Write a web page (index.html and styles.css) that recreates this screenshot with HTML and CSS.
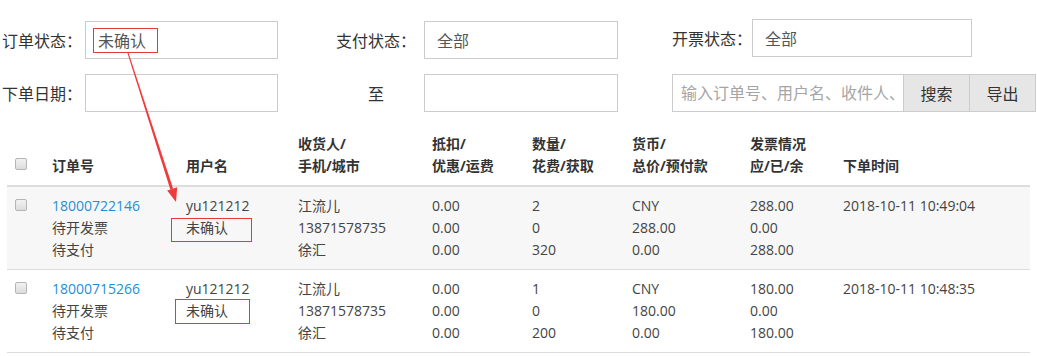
FILE: index.html
```html
<!DOCTYPE html>
<html lang="zh-CN">
<head>
    <meta charset="UTF-8">
    <title>订单列表</title>
    <link rel="stylesheet" href="styles.css">
</head>
<body>
    <div class="page">
        <!-- 검색 조건 -->
        <div class="filter">
            <div class="filter-row">
                <div class="field field-a">
                    <label>订单状态：</label>
                    <input type="text" class="ipt" value="未确认" readonly>
                </div>
                <div class="field field-b">
                    <label>支付状态：</label>
                    <input type="text" class="ipt" value="全部" readonly>
                </div>
                <div class="field field-c up">
                    <label>开票状态：</label>
                    <input type="text" class="ipt" value="全部" readonly>
                </div>
            </div>
            <div class="filter-row">
                <div class="field field-a">
                    <label>下单日期：</label>
                    <input type="text" class="ipt">
                </div>
                <div class="field field-b">
                    <label>至</label>
                    <input type="text" class="ipt">
                </div>
                <div class="field field-c search">
                    <input type="text" class="ipt-search" placeholder="输入订单号、用户名、收件人、手机号">
                    <button class="btn">搜索</button>
                    <button class="btn btn-last">导出</button>
                </div>
            </div>
        </div>

        <!-- 주문 목록 -->
        <table class="order-list">
            <colgroup>
                <col style="width:37px">
                <col style="width:134px">
                <col style="width:112px">
                <col style="width:134px">
                <col style="width:100px">
                <col style="width:100px">
                <col style="width:118px">
                <col style="width:93px">
                <col style="width:195px">
            </colgroup>
            <thead>
                <tr>
                    <th><input type="checkbox" class="chk chk-head"></th>
                    <th>订单号</th>
                    <th>用户名</th>
                    <th>收货人/<br>手机/城市</th>
                    <th>抵扣/<br>优惠/运费</th>
                    <th>数量/<br>花费/获取</th>
                    <th>货币/<br>总价/预付款</th>
                    <th>发票情况<br>应/已/余</th>
                    <th>下单时间</th>
                </tr>
            </thead>
            <tbody>
                <tr class="odd">
                    <td><input type="checkbox" class="chk"></td>
                    <td><a href="#">18000722146</a><br>待开发票<br>待支付</td>
                    <td>yu121212<br>未确认</td>
                    <td>江流儿<br>13871578735<br>徐汇</td>
                    <td>0.00<br>0.00<br>0.00</td>
                    <td>2<br>0<br>320</td>
                    <td>CNY<br>288.00<br>0.00</td>
                    <td>288.00<br>0.00<br>288.00</td>
                    <td>2018-10-11 10:49:04</td>
                </tr>
                <tr>
                    <td><input type="checkbox" class="chk"></td>
                    <td><a href="#">18000715266</a><br>待开发票<br>待支付</td>
                    <td>yu121212<br>未确认</td>
                    <td>江流儿<br>13871578735<br>徐汇</td>
                    <td>0.00<br>0.00<br>0.00</td>
                    <td>1<br>0<br>200</td>
                    <td>CNY<br>180.00<br>0.00</td>
                    <td>180.00<br>0.00<br>180.00</td>
                    <td>2018-10-11 10:48:35</td>
                </tr>
            </tbody>
        </table>

        <!-- 주석 표시 (빨간 박스 + 화살표) -->
        <svg class="mark" width="1037" height="356" viewBox="0 0 1037 356">
            <rect x="93.5" y="28.5" width="64" height="24" fill="none" stroke="#e53935" stroke-width="1"/>
            <rect x="171.5" y="218.5" width="80" height="23" fill="none" stroke="#e53935" stroke-width="1"/>
            <rect x="175.5" y="299.5" width="74" height="24" fill="none" stroke="#e53935" stroke-width="1"/>
            <polygon points="128.5,52.8 127.5,53.2 170.3,189.5 173.1,188.5" fill="#ee3b3b"/>
            <polygon points="176,202 177.2,187.2 167.2,190.4" fill="#ee3b3b"/>
        </svg>
    </div>
</body>
</html>
```

FILE: styles.css
```css
body, div, table, th, td, label, input, button{
    font-family: "Open Sans", "Noto Sans CJK SC", sans-serif;
    margin: 0; padding: 0;
}
body{ color: #333; background: #fff; }

.page{
    position: relative;
    width: 1037px;
    height: 356px;
    overflow: hidden;
}

/* filter */
.filter{ padding: 21px 0 0 2px; }
.filter-row{
    display: flex;
    align-items: center;
    height: 38px;
    margin-bottom: 15px;
}
.filter-row:last-child{ margin-bottom: 0; }
.field{
    display: flex;
    align-items: center;
    font-size: 16px;
}
.field label{ display: block; }
.field-a label{ width: 83px; }
.field-a .ipt{ width: 193px; }
.field-b{ margin-left: 50px; }
.field-b label{ width: 96px; text-align: center; }
.field-b .ipt{ width: 194px; }
.field-c{ margin-left: 54px; }
.field-c label{ width: 80px; }
.field-c .ipt{ width: 220px; }
.field-c.up{ margin-top: -4px; }

.ipt{
    box-sizing: border-box;
    height: 38px;
    padding: 0 12px;
    border: 1px solid #ccc;
    font-size: 16px;
    color: #555;
    outline: none;
    background: #fff;
}

.ipt-search{
    box-sizing: border-box;
    width: 232px;
    height: 38px;
    padding: 0 0 0 8px;
    border: 1px solid #ccc;
    font-size: 16px;
    outline: none;
}
.ipt-search::placeholder{ color: #a5a5a5; }

.btn{
    box-sizing: border-box;
    width: 66px;
    height: 38px;
    border: 1px solid #ccc;
    border-left: 0;
    background-color: #e6e6e6;
    font-size: 16px;
    color: #333;
}

/* table */
.order-list{
    margin: 13px 0 0 7px;
    width: 1023px;
    table-layout: fixed;
    border-collapse: collapse;
    font-size: 14px;
    line-height: 22px;
}
.order-list th{
    padding: 8px 0 8px 8px;
    text-align: left;
    vertical-align: bottom;
    font-weight: bold;
    color: #333;
    border-bottom: 2px solid #ddd;
    white-space: nowrap;
}
.order-list td{
    padding: 8px 0 8px 8px;
    vertical-align: top;
    color: #444;
    border-bottom: 1px solid #ddd;
    white-space: nowrap;
}
.order-list .odd td{ background-color: #f7f7f7; }
.order-list a{ color: #1e8fd5; text-decoration: none; }

.chk{
    -webkit-appearance: none;
    appearance: none;
    display: block;
    box-sizing: border-box;
    width: 12px;
    height: 12px;
    margin: 4px 0 0 0;
    border: 1px solid #b5b5b5;
    border-radius: 2px;
    background: linear-gradient(#f2f2f2, #dcdcdc);
}
.chk-head{ margin: 0 0 7px 0; }

/* annotation */
.mark{
    position: absolute;
    left: 0;
    top: 0;
    pointer-events: none;
}
```
